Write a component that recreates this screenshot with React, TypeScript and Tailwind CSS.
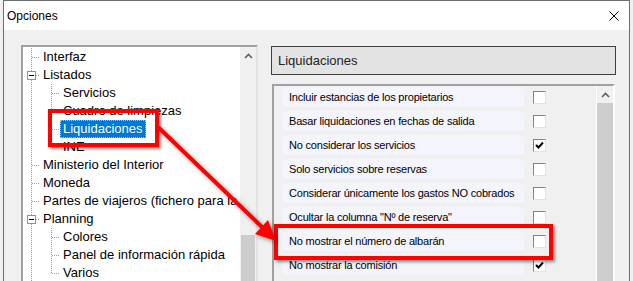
import React from 'react';

type TreeItem = { label: string; level: 0 | 1; expand?: boolean; last?: boolean; selected?: boolean };

const treeItems: TreeItem[] = [
  { label: 'Interfaz', level: 0 },
  { label: 'Listados', level: 0, expand: true },
  { label: 'Servicios', level: 1 },
  { label: 'Cuadro de limpiezas', level: 1 },
  { label: 'Liquidaciones', level: 1, selected: true },
  { label: 'INE', level: 1, last: true },
  { label: 'Ministerio del Interior', level: 0 },
  { label: 'Moneda', level: 0 },
  { label: 'Partes de viajeros (fichero para la policía)', level: 0 },
  { label: 'Planning', level: 0, expand: true },
  { label: 'Colores', level: 1 },
  { label: 'Panel de información rápida', level: 1 },
  { label: 'Varios', level: 1, last: true },
];

const options = [
  { label: 'Incluir estancias de los propietarios', checked: false },
  { label: 'Basar liquidaciones en fechas de salida', checked: false },
  { label: 'No considerar los servicios', checked: true },
  { label: 'Solo servicios sobre reservas', checked: false },
  { label: 'Considerar únicamente los gastos NO cobrados', checked: false },
  { label: 'Ocultar la columna "Nº de reserva"', checked: false },
  { label: 'No mostrar el número de albarán', checked: false },
  { label: 'No mostrar la comisión', checked: true },
];

const dot = { stroke: '#a0a0a0', strokeWidth: 1, strokeDasharray: '1 1' };

function Guide({ item }: { item: TreeItem }) {
  // dotted connector lines of the tree
  if (item.level === 0) {
    return (
      <svg width="17" height="18" className="shrink-0">
        <line x1="8.5" y1="0" x2="8.5" y2="18" {...dot} />
        {item.expand ? (
          <>
            <rect x="4.5" y="5.5" width="8" height="8" fill="#fff" stroke="#919191" />
            <line x1="6" y1="9.5" x2="11" y2="9.5" stroke="#000" />
            <line x1="13" y1="9.5" x2="17" y2="9.5" {...dot} />
          </>
        ) : (
          <line x1="9" y1="9.5" x2="17" y2="9.5" {...dot} />
        )}
      </svg>
    );
  }
  return (
    <svg width="37" height="18" className="shrink-0">
      <line x1="8.5" y1="0" x2="8.5" y2="18" {...dot} />
      <line x1="28.5" y1="0" x2="28.5" y2={item.last ? 10 : 18} {...dot} />
      <line x1="29" y1="9.5" x2="37" y2="9.5" {...dot} />
    </svg>
  );
}

function Chevron() {
  return (
    <svg width="9" height="6">
      <polyline points="1,5 4.5,1.5 8,5" fill="none" stroke="#606060" strokeWidth="1.6" />
    </svg>
  );
}

function Checkbox({ checked }: { checked: boolean }) {
  return (
    <div className="w-[13px] h-[13px] shrink-0 bg-white border border-[#858585] border-r-[#e3e3e3] border-b-[#e3e3e3]">
      {checked && (
        <svg width="11" height="11">
          <polyline points="2,5 4.5,7.5 9,2.5" fill="none" stroke="#000" strokeWidth="2" />
        </svg>
      )}
    </div>
  );
}

export default function App() {
  return (
    <div className="relative w-[633px] h-[281px] overflow-hidden bg-[#f0f0f0] font-['Liberation_Sans',Arial,sans-serif]">
      <div className="ml-[3px] w-[627px] h-[300px] border border-b-0 border-[#6d6d6d] bg-[#f0f0f0]">
        {/* title bar */}
        <div className="h-[29px] bg-white flex items-center justify-between pl-[3px] pr-[10px]">
          <span className="text-[12px] text-black">Opciones</span>
          <svg width="10" height="10">
            <line x1="0.5" y1="0.5" x2="9.5" y2="9.5" stroke="#000" />
            <line x1="9.5" y1="0.5" x2="0.5" y2="9.5" stroke="#000" />
          </svg>
        </div>

        <div className="flex items-start pt-[15px] pl-[17px]">
          {/* tree */}
          <div className="w-[237px] h-[260px] border-2 border-t-[#a0a0a0] border-l-[#a0a0a0] border-r-[#e3e3e3] border-b-[#e3e3e3] flex">
            <div className="flex-1 bg-white pt-[1px] overflow-hidden">
              {treeItems.map((item) => (
                <div key={item.label} className="flex h-[18px] items-stretch">
                  <Guide item={item} />
                  <span
                    className={`px-[2px] text-[13px] leading-[16px] whitespace-nowrap border ${
                      item.selected
                        ? 'bg-[#0078d7] text-white border-dotted border-[#ffb347]'
                        : 'text-black border-transparent'
                    }`}
                  >
                    {item.label}
                  </span>
                </div>
              ))}
            </div>
            <div className="w-[16px] bg-[#f0f0f0] flex flex-col">
              <div className="h-[17px] flex items-center justify-center">
                <Chevron />
              </div>
              <div className="flex-1" />
              <div className="h-[68px] bg-[#cdcdcd] mx-[1px]" />
            </div>
          </div>

          {/* right panel */}
          <div className="ml-[13px] mt-[1px] flex flex-col">
            <div className="w-[345px] h-[29px] border border-[#404040] bg-[#e3e3e3] flex items-center pl-[6px]">
              <span className="text-[13px] text-[#222]">Liquidaciones</span>
            </div>
            <div className="mt-[9px] ml-[1px] w-[343px] h-[210px] border-2 border-t-[#a0a0a0] border-l-[#a0a0a0] border-r-[#ffffff] border-b-[#ffffff] flex">
              <div className="flex-1 flex flex-col gap-[4px] pt-[1px] overflow-hidden">
                {options.map((o) => (
                  <div key={o.label} className="flex items-center h-[20px] pl-[8px]">
                    <div className="w-[242px] h-[20px] rounded-[5px] bg-[#f4f4fc] flex items-center pl-[7px]">
                      <span className="text-[11px] tracking-[-0.2px] text-black whitespace-nowrap">{o.label}</span>
                    </div>
                    <div className="ml-[9px]">
                      <Checkbox checked={o.checked} />
                    </div>
                  </div>
                ))}
              </div>
              <div className="w-[17px] bg-[#f0f0f0] border-l border-white flex flex-col">
                <div className="h-[17px] flex items-center justify-center">
                  <Chevron />
                </div>
                <div className="flex-1 bg-[#cdcdcd]" />
              </div>
            </div>
          </div>
        </div>
      </div>

      {/* annotations */}
      <div className="absolute left-[48px] top-[109px] w-[111px] h-[38px] border-4 border-[#ff0000] shadow-[2px_2px_3px_rgba(0,0,0,0.45)]" />
      <div className="absolute left-[274px] top-[224px] w-[279px] h-[36px] border-4 border-[#ff0000] shadow-[2px_2px_3px_rgba(0,0,0,0.45)]" />
      <svg
        className="absolute left-0 top-0 pointer-events-none drop-shadow-[2px_2px_2px_rgba(0,0,0,0.4)]"
        width="633"
        height="281"
      >
        <line x1="158" y1="127" x2="263" y2="228" stroke="#ff0000" strokeWidth="4" />
        <polygon points="276,241 255,234 268,220" fill="#ff0000" />
      </svg>
    </div>
  );
}
